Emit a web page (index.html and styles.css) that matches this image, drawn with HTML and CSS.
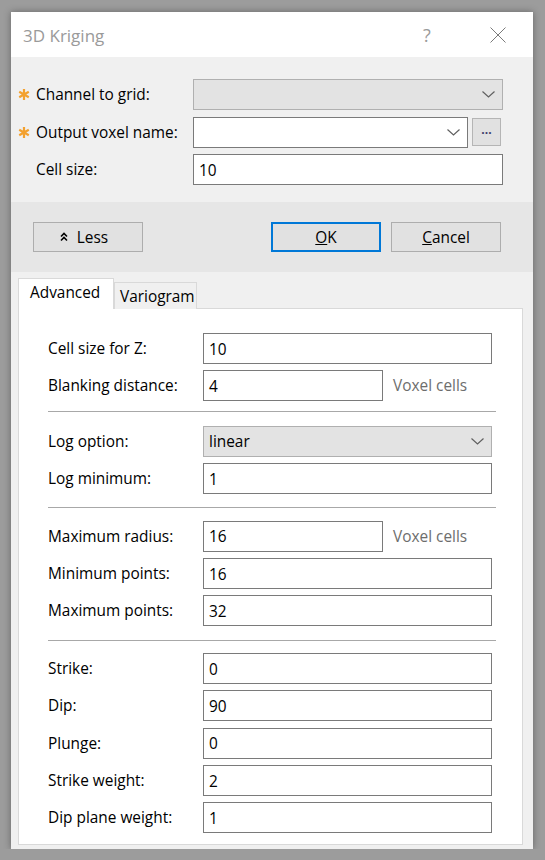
FILE: index.html
```html
<!DOCTYPE html>
<html>
<head>
<meta charset="utf-8">
<title>3D Kriging</title>
<link rel="stylesheet" href="styles.css">
</head>
<body>
<div class="dialog">
  <div class="titlebar">
    <span class="title">3D Kriging</span>
    <span class="help">?</span>
    <svg class="close" width="16" height="16" viewBox="0 0 16 16"><path d="M0.5 0.5 L15.5 15.5 M15.5 0.5 L0.5 15.5" stroke="#7a7a7a" stroke-width="1" fill="none"/></svg>
  </div>

  <div class="top">
    <div class="frow">
      <svg class="star" width="12" height="11" viewBox="0 0 12 11"><path d="M6 0 V11 M1.2 2.75 L10.8 8.25 M1.2 8.25 L10.8 2.75" stroke="#f3a12f" stroke-width="2.2" fill="none"/></svg>
      <span class="flabel">Channel to grid:</span>
      <div class="combo disabled"><span class="cval"></span><svg class="chev" width="13" height="7" viewBox="0 0 13 7"><path d="M0.5 0.5 L6.5 6 L12.5 0.5" stroke="#606060" stroke-width="1.2" fill="none"/></svg></div>
    </div>
    <div class="frow">
      <svg class="star" width="12" height="11" viewBox="0 0 12 11"><path d="M6 0 V11 M1.2 2.75 L10.8 8.25 M1.2 8.25 L10.8 2.75" stroke="#f3a12f" stroke-width="2.2" fill="none"/></svg>
      <span class="flabel">Output voxel name:</span>
      <div class="fieldpair">
        <div class="combo"><span class="cval"></span><svg class="chev" width="13" height="7" viewBox="0 0 13 7"><path d="M0.5 0.5 L6.5 6 L12.5 0.5" stroke="#606060" stroke-width="1.2" fill="none"/></svg></div>
        <div class="browse">...</div>
      </div>
    </div>
    <div class="frow">
      <span></span>
      <span class="flabel">Cell size:</span>
      <div class="input">10</div>
    </div>
  </div>

  <div class="band">
    <div class="btn less"><svg width="8" height="10" viewBox="0 0 8 10"><path d="M1 4.5 L4 1.5 L7 4.5 M1 8.5 L4 5.5 L7 8.5" stroke="#000" stroke-width="1.6" fill="none"/></svg><span>Less</span></div>
    <div class="btn ok"><span><u>O</u>K</span></div>
    <div class="btn"><span><u>C</u>ancel</span></div>
  </div>

  <div class="tabarea">
    <div class="tabs">
      <div class="tab active">Advanced</div>
      <div class="tab">Variogram</div>
    </div>
    <div class="panel">
      <div class="group">
        <div class="prow"><span>Cell size for Z:</span><div class="input">10</div></div>
        <div class="prow"><span>Blanking distance:</span><div class="short"><div class="input">4</div><span class="unit">Voxel cells</span></div></div>
      </div>
      <div class="sep sep-a"></div>
      <div class="group">
        <div class="prow"><span>Log option:</span><div class="combo disabled"><span class="cval">linear</span><svg class="chev" width="13" height="7" viewBox="0 0 13 7"><path d="M0.5 0.5 L6.5 6 L12.5 0.5" stroke="#606060" stroke-width="1.2" fill="none"/></svg></div></div>
        <div class="prow"><span>Log minimum:</span><div class="input">1</div></div>
      </div>
      <div class="sep sep-b"></div>
      <div class="group">
        <div class="prow"><span>Maximum radius:</span><div class="short"><div class="input">16</div><span class="unit">Voxel cells</span></div></div>
        <div class="prow"><span>Minimum points:</span><div class="input">16</div></div>
        <div class="prow"><span>Maximum points:</span><div class="input">32</div></div>
      </div>
      <div class="sep sep-c"></div>
      <div class="group">
        <div class="prow"><span>Strike:</span><div class="input">0</div></div>
        <div class="prow"><span>Dip:</span><div class="input">90</div></div>
        <div class="prow"><span>Plunge:</span><div class="input">0</div></div>
        <div class="prow"><span>Strike weight:</span><div class="input">2</div></div>
        <div class="prow"><span>Dip plane weight:</span><div class="input">1</div></div>
      </div>
    </div>
  </div>
</div>
</body>
</html>
```

FILE: styles.css
```css
* { box-sizing: border-box; }

body {
  margin: 0;
  padding: 12px 0 0 11px;
  background: #9c9c9c;
  font-family: "Open Sans", "Noto Sans", sans-serif;
  font-size: 15.4px;
  color: #000;
}

.dialog {
  width: 522px;
  height: 837px;
  background: #f0f0f0;
  display: flex;
  flex-direction: column;
  box-shadow: 0 0 7px rgba(0, 0, 0, 0.35);
}

.titlebar {
  height: 45px;
  flex-shrink: 0;
  background: #fff;
  display: flex;
  align-items: center;
}

.title {
  flex: 1;
  margin-left: 12px;
  margin-top: 2px;
  font-size: 17px;
  color: #9a9a9a;
}

.help {
  width: 20px;
  text-align: center;
  font-size: 18px;
  color: #9a9a9a;
  margin-right: 53px;
}

.close {
  margin-right: 27px;
  margin-top: 1px;
}

.top {
  height: 145px;
  flex-shrink: 0;
  padding: 22px 30px 0 7px;
  display: flex;
  flex-direction: column;
  gap: 6.5px;
}

.frow {
  display: grid;
  grid-template-columns: 18px 157px 1fr;
  align-items: center;
  height: 31px;
}

.star {
  display: block;
}

.combo {
  height: 31px;
  background: #fff;
  border: 1px solid #7a7a7a;
  display: flex;
  align-items: center;
  padding: 0 7px 0 5px;
}

.combo.disabled {
  background: #e3e3e3;
  border-color: #b0b0b0;
}

.cval {
  flex: 1;
}

.chev {
  display: block;
}

.fieldpair {
  display: flex;
  align-items: center;
  gap: 4px;
  padding-right: 2px;
}

.fieldpair .combo {
  flex: 1;
}

.browse {
  width: 29px;
  height: 28px;
  background: #e1e1e1;
  border: 1px solid #b5b5b5;
  text-align: center;
  font-size: 12px;
  font-weight: bold;
  line-height: 22px;
  color: #3a3a6a;
}

.input {
  height: 31px;
  background: #fff;
  border: 1px solid #7a7a7a;
  padding-left: 5px;
  padding-top: 1px;
  display: flex;
  align-items: center;
}

.band {
  height: 70px;
  flex-shrink: 0;
  background: #e6e6e6;
  display: flex;
  align-items: flex-start;
  gap: 10px;
  padding: 20px 32px 0 22px;
}

.btn {
  width: 110px;
  height: 30px;
  background: #e1e1e1;
  border: 1px solid #adadad;
  display: flex;
  align-items: center;
  justify-content: center;
  gap: 9px;
}

.less {
  margin-right: auto;
}

.less span {
  margin-right: 8px;
}

.ok {
  border: 2px solid #0078d7;
}

.tabarea {
  flex: 1;
  display: flex;
  flex-direction: column;
  padding: 6px 10px 4px 7px;
}

.tabs {
  display: flex;
  align-items: flex-end;
  height: 31px;
  margin-bottom: -1px;
  position: relative;
  z-index: 1;
}

.tab {
  width: 83px;
  height: 27px;
  background: #f0f0f0;
  border: 1px solid #d9d9d9;
  border-bottom: none;
  padding: 3px 0 0 5px;
}

.tab.active {
  width: 96px;
  height: 31px;
  background: #fff;
  border-color: #d9d9d9;
  padding: 3px 0 0 11px;
}

.panel {
  flex: 1;
  background: #fff;
  border: 1px solid #d9d9d9;
  padding: 24px 29px 0 29px;
}

.group {
  display: flex;
  flex-direction: column;
  gap: 6.33px;
}

.prow {
  display: grid;
  grid-template-columns: 155px 289px;
  align-items: center;
  height: 31px;
}

.short {
  display: flex;
  align-items: center;
  gap: 10px;
}

.short .input {
  width: 180px;
}

.unit {
  color: #6d6d6d;
  white-space: nowrap;
}

.sep {
  height: 1px;
  width: 448px;
  background: #a8a8a8;
}

.sep-a {
  margin: 9.4px 0 14.3px;
}

.sep-b {
  margin: 12.7px 0 12.7px;
}

.sep-c {
  margin: 13.3px 0 12.4px;
}
```
